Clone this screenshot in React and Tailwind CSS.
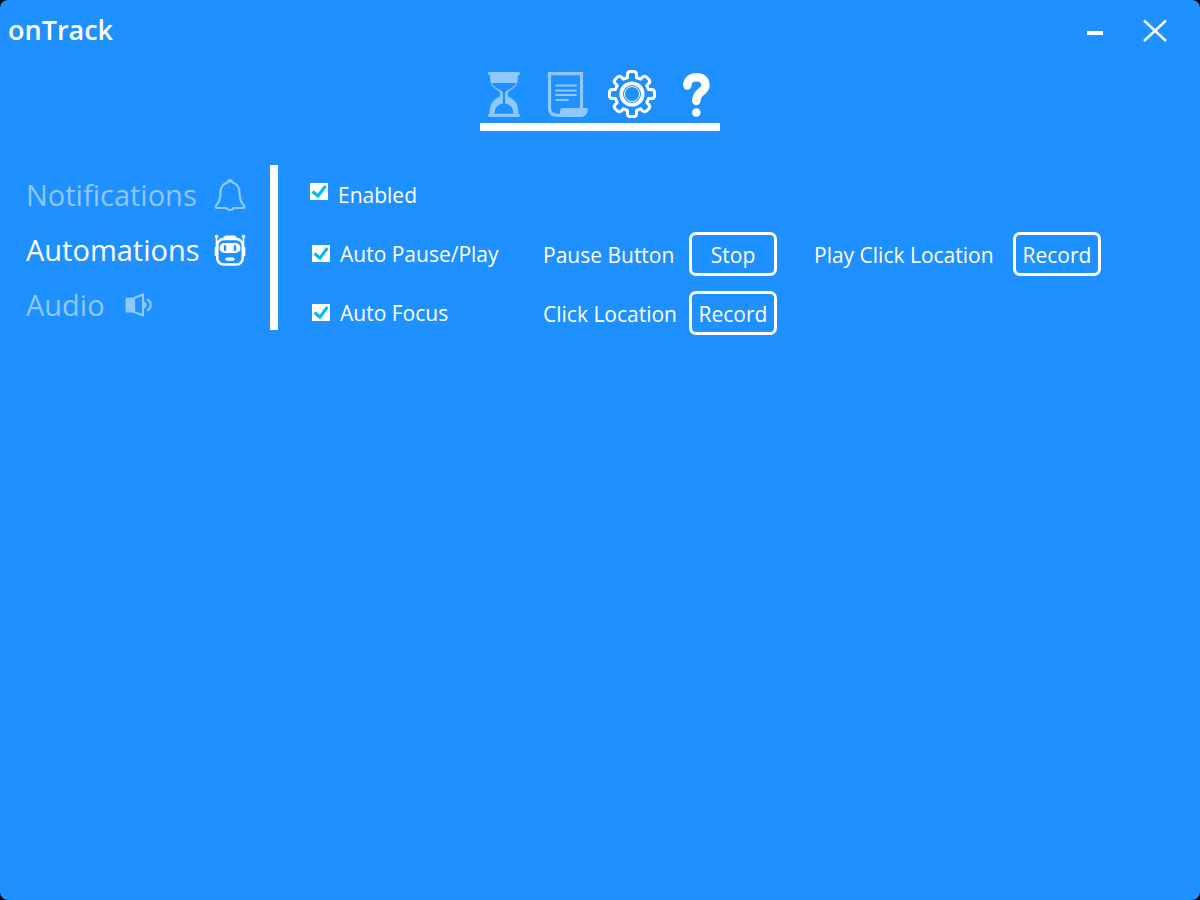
import React, { useState } from "react";

const HourglassIcon = () => (
  <svg viewBox="0 0 32 46" className="h-[46px] w-8" fill="currentColor" aria-hidden="true">
    <path
      fillRule="evenodd"
      d="M1.500 0H30.500Q32 0 32 1.500T30.500 3.300H30C30 12 28 15.500 22 18.500Q19.700 20 19.700 22.500T22 25.500C28 28.500 30.500 33 30.500 41.700H30.500Q32 41.700 32 43.300T30.500 45H1.500Q0 45 0 43.300T1.500 41.700H1.500C1.500 33 4 28.500 10 25.500Q12.300 25 12.300 22.500T10 18.500C4 15.500 2 12 2 3.300H1.500Q0 3.300 0 1.500T1.500 0ZM3.800 11C5 14.500 8 16 11 17.500Q14.800 19 14.800 21V31.500C9.500 32.500 6.500 36 6.500 41.700H25.500C25.500 36 22.500 32.500 17.200 31.500V21Q17.200 19 21 17.500C24 16 27 14.500 28.200 11Z"
    />
  </svg>
);

const ScrollIcon = () => (
  <svg viewBox="0 0 42 46" className="h-[46px] w-[42px]" fill="none" stroke="currentColor" aria-hidden="true">
    <path d="M34.500 37V1.700H2.500V36Q2.500 43.300 10 43.300H14" strokeWidth="3.200" />
    <path d="M15.500 36H41Q41 45 33 45H10Q13 44 13 40Q13 36 15.500 36Z" fill="currentColor" stroke="none" />
    <path d="M9 13.500H29M9 18.500H29M9 23H29M9 28H21" strokeWidth="2" strokeLinecap="round" />
  </svg>
);

const GearIcon = () => (
  <svg viewBox="-24 -24 48 48" className="h-12 w-12" fill="none" stroke="currentColor" aria-hidden="true">
    <path
      d="M-4.500 -16.500V-19.500Q-4.500 -22.500 -1.500 -22.500H1.500Q4.500 -22.500 4.500 -19.500V-16.500L8.500 -14.800L10.600 -16.800Q12.700 -18.700 14.800 -16.700L16.700 -14.800Q18.700 -12.700 16.800 -10.600L14.800 -8.500L16.500 -4.500H19.500Q22.500 -4.500 22.500 -1.500V1.500Q22.500 4.500 19.500 4.500H16.500L14.800 8.500L16.800 10.600Q18.700 12.700 16.700 14.800L14.800 16.700Q12.700 18.700 10.600 16.800L8.500 14.800L4.500 16.500V19.500Q4.500 22.500 1.500 22.500H-1.500Q-4.500 22.500 -4.500 19.500V16.500L-8.500 14.800L-10.600 16.800Q-12.700 18.700 -14.800 16.700L-16.700 14.800Q-18.700 12.700 -16.800 10.600L-14.800 8.500L-16.500 4.500H-19.500Q-22.500 4.500 -22.500 1.500V-1.500Q-22.500 -4.500 -19.500 -4.500H-16.500L-14.800 -8.500L-16.800 -10.600Q-18.700 -12.700 -16.700 -14.800L-14.800 -16.700Q-12.700 -18.700 -10.600 -16.800L-8.500 -14.800Z"
      strokeWidth="3"
      strokeLinejoin="round"
    />
    <circle r="10.800" strokeWidth="3.600" />
    <circle r="7.500" strokeWidth="1" />
  </svg>
);

const QuestionIcon = () => (
  <svg viewBox="0 0 28 46" className="h-[46px] w-7" fill="none" stroke="currentColor" aria-hidden="true">
    <path d="M5.300 13.500C5.300 8 9.500 5.200 14.500 5.200C20 5.200 23.500 8.500 23.500 13C23.500 20.500 14.300 19 14.300 29" strokeWidth="8.400" strokeLinecap="round" />
    <circle cx="14.300" cy="40.500" r="4.300" fill="currentColor" stroke="none" />
  </svg>
);

const BellIcon = () => (
  <svg viewBox="0 0 32 34" className="h-[34px] w-8" fill="none" stroke="currentColor" strokeWidth="2.200" strokeLinejoin="round" aria-hidden="true">
    <path d="M13.500 4.500Q14 2 16 2T18.500 4.500C23.500 6 25.500 9.500 25.500 14.500C25.500 20.500 26.500 24 29.500 27Q31 29 29.500 30H19.500Q18.500 32 16 32T12.500 30H2.500Q1 29 2.500 27C5.500 24 6.500 20.500 6.500 14.500C6.500 9.500 8.500 6 13.500 4.500Z" />
    <path d="M13.500 4Q16 2.500 18.500 4" />
  </svg>
);

const RobotIcon = () => (
  <svg viewBox="0 0 32 32" className="h-8 w-8" fill="none" stroke="currentColor" aria-hidden="true">
    <rect x="3.200" y="5" width="25.600" height="25.500" rx="6.500" strokeWidth="2.600" />
    <path d="M2.500 2V16M29.500 2V16" strokeWidth="1.600" />
    <path d="M1.700 13V22M30.300 13V22" strokeWidth="2" />
    <g fill="currentColor" stroke="none">
      <circle cx="2.500" cy="2.500" r="1.800" />
      <circle cx="29.500" cy="2.500" r="1.800" />
      <path d="M9 4Q10 1.500 12 1.500H20Q22 1.500 23 4V5H9Z" />
      <rect x="11.500" y="23.500" width="9" height="3.200" rx="1.500" />
      <path
        fillRule="evenodd"
        d="M10.500 9H21.500A5 5 0 0 1 21.500 19H10.500A5 5 0 0 1 10.500 9ZM11 11Q9.800 11 9.800 12.500V15.500Q9.800 17 11 17T12.200 15.500V12.500Q12.200 11 11 11ZM21 11Q19.800 11 19.800 12.500V15.500Q19.800 17 21 17T22.200 15.500V12.500Q22.200 11 21 11Z"
      />
    </g>
  </svg>
);

const SpeakerIcon = () => (
  <svg viewBox="0 0 28 24" className="h-6 w-7" fill="none" stroke="currentColor" strokeWidth="2.200" aria-hidden="true">
    <path d="M2 4.500H9.500V19.500H2Q.5 19.500 .5 18V6Q.5 4.500 2 4.500Z" fill="currentColor" stroke="none" />
    <path d="M9 5L18 1.500V22.500L9 19Z" strokeLinejoin="round" />
    <path d="M18.500 8.500Q21.700 9 21.700 12T18.500 15.500Z" fill="currentColor" stroke="none" />
    <path d="M22 6.500Q25.700 8 25.700 12T22 17.500" />
  </svg>
);

const tabs = [
  { name: "Timer", Icon: HourglassIcon, dim: true },
  { name: "Log", Icon: ScrollIcon, dim: true },
  { name: "Settings", Icon: GearIcon, dim: false },
  { name: "Help", Icon: QuestionIcon, dim: false },
];

const sections = [
  { name: "Notifications", Icon: BellIcon, labelWidth: "w-[188px]" },
  { name: "Automations", Icon: RobotIcon, labelWidth: "w-[188px]" },
  { name: "Audio", Icon: SpeakerIcon, labelWidth: "w-[99px]" },
];

function Check({ children, raised = false }) {
  const [checked, setChecked] = useState(true);
  return (
    <label className={raised ? "flex items-start gap-2.5" : "flex items-center gap-2.5 pl-0.5"}>
      <span className="relative flex">
        <input
          type="checkbox"
          checked={checked}
          onChange={(e) => setChecked(e.target.checked)}
          className="peer h-[17px] w-[18px] appearance-none bg-white"
        />
        <svg
          viewBox="0 0 18 17"
          className="pointer-events-none absolute inset-0 hidden h-full w-full text-[#00b9f8] peer-checked:block"
          fill="none"
          stroke="currentColor"
          strokeWidth="3"
          aria-hidden="true"
        >
          <path d="M2.500 8.500L8 13L15.500 3" />
        </svg>
      </span>
      <span className="leading-6 whitespace-nowrap">{children}</span>
    </label>
  );
}

function FieldName({ id, children }) {
  return (
    <span id={id} className="pt-1 whitespace-nowrap">
      {children}
    </span>
  );
}

function ActionButton({ id, labelledBy, children }) {
  return (
    <button
      type="button"
      id={id}
      aria-labelledby={`${labelledBy} ${id}`}
      className="h-11 w-[88px] shrink-0 rounded-[7px] border-3 border-white pt-1 text-center"
    >
      {children}
    </button>
  );
}

export default function App() {
  const [section, setSection] = useState("Automations");
  return (
    <div className="min-h-screen bg-black">
      <div className="min-h-screen rounded-lg bg-[#1e90ff] font-['Open_Sans','Noto_Sans',sans-serif] text-white">
        <header className="flex h-[60px] items-center justify-between pr-[30px] pl-2">
          <h1 className="text-[27px] font-semibold">onTrack</h1>
          <div className="flex gap-[30px]">
            <button type="button" aria-label="Minimize" className="flex h-[30px] w-[30px] items-center justify-center">
              <svg viewBox="0 0 30 30" className="h-[30px] w-[30px]" aria-hidden="true">
                <path d="M7 18H23" stroke="currentColor" strokeWidth="4" />
              </svg>
            </button>
            <button type="button" aria-label="Close" className="flex h-[30px] w-[30px] items-center justify-center">
              <svg viewBox="0 0 30 30" className="h-[30px] w-[30px]" aria-hidden="true">
                <path d="M4 5.500L26 26M26 5.500L4 26" stroke="currentColor" strokeWidth="2.400" />
              </svg>
            </button>
          </div>
        </header>

        <nav aria-label="Pages" className="mx-auto flex h-[71px] w-60 gap-4 border-b-8 border-white pb-[5px]">
          {tabs.map(({ name, Icon, dim }) => (
            <button
              key={name}
              type="button"
              aria-label={name}
              className={
                dim
                  ? "flex w-12 items-end justify-center text-[#8fc8ff]"
                  : "flex w-12 items-end justify-center"
              }
            >
              <Icon />
            </button>
          ))}
        </nav>

        <main className="mt-[34px] flex items-start">
          <nav aria-label="Settings" className="flex w-[278px] shrink-0 flex-col border-r-8 border-white pl-[26px]">
            {sections.map(({ name, Icon, labelWidth }) => (
              <button
                key={name}
                type="button"
                onClick={() => setSection(name)}
                className={
                  name === section
                    ? "flex h-[55px] items-center pt-1 text-left text-[29px]"
                    : "flex h-[55px] items-center pt-1 text-left text-[29px] text-[#8fc8ff]"
                }
              >
                <span className={labelWidth}>{name}</span>
                <Icon />
              </button>
            ))}
          </nav>

          <section
            aria-label={section}
            className="grid auto-rows-[59px] grid-cols-[233px_146px_125px_199px_auto] items-center pl-8 text-[21px]"
          >
            <div className="col-span-5">
              <Check raised>Enabled</Check>
            </div>

            <Check>Auto Pause/Play</Check>
            <FieldName id="pause-label">Pause Button</FieldName>
            <ActionButton id="pause-action" labelledBy="pause-label">Stop</ActionButton>
            <FieldName id="play-label">Play Click Location</FieldName>
            <ActionButton id="play-action" labelledBy="play-label">Record</ActionButton>

            <Check>Auto Focus</Check>
            <FieldName id="focus-label">Click Location</FieldName>
            <ActionButton id="focus-action" labelledBy="focus-label">Record</ActionButton>
          </section>
        </main>
      </div>
    </div>
  );
}
